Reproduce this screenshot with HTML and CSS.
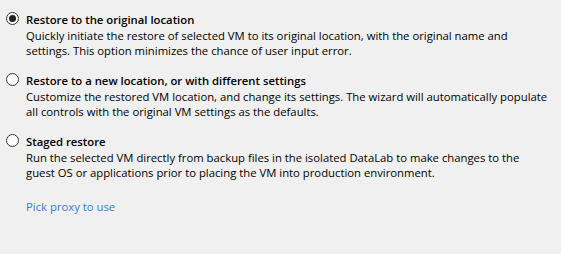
FILE: index.html
```html
<!DOCTYPE html>
<html>
<head>
<meta charset="utf-8">
<link rel="stylesheet" href="styles.css">
</head>
<body>
<div class="page">
  <div class="option">
    <div class="head">
      <span class="radio checked"><span class="dot"></span></span>
      <span class="title">Restore to the original location</span>
    </div>
    <p class="desc">Quickly initiate the restore of selected VM to its original location, with the original name and settings. This option minimizes the chance of user input error.</p>
  </div>
  <div class="option">
    <div class="head">
      <span class="radio"></span>
      <span class="title">Restore to a new location, or with different settings</span>
    </div>
    <p class="desc">Customize the restored VM location, and change its settings. The wizard will automatically populate all controls with the original VM settings as the defaults.</p>
  </div>
  <div class="option">
    <div class="head">
      <span class="radio"></span>
      <span class="title">Staged restore</span>
    </div>
    <p class="desc">Run the selected VM directly from backup files in the isolated DataLab to make changes to the guest OS or applications prior to placing the VM into production environment.</p>
  </div>
  <a class="link" href="#">Pick proxy to use</a>
</div>
</body>
</html>
```
FILE: styles.css
```css
html, body {
  margin: 0;
  padding: 0;
  background: #f0f0f0;
}
.page {
  width: 561px;
  height: 254px;
  box-sizing: border-box;
  padding: 12px 0 0 6px;
  font-family: "Open Sans", "Noto Sans", sans-serif;
  font-size: 11.3px;
  line-height: 15px;
  color: #000;
  display: flex;
  flex-direction: column;
}
.option {
  display: flex;
  flex-direction: column;
  margin-bottom: 15px;
}
.option:last-of-type {
  margin-bottom: 19px;
}
.head {
  display: flex;
  align-items: flex-start;
  gap: 7px;
  height: 15px;
}
.radio {
  width: 11px;
  height: 11px;
  border: 1px solid #333;
  border-radius: 50%;
  background: #fff;
  display: flex;
  align-items: center;
  justify-content: center;
  box-sizing: content-box;
}
.dot {
  width: 7px;
  height: 7px;
  border-radius: 50%;
  background: #222;
}
.title {
  font-weight: 600;
}
.desc {
  margin: 1px 0 0 20px;
  width: 523px;
}
.link {
  margin-left: 20px;
  color: #3a7bd5;
  text-decoration: none;
  align-self: flex-start;
}
```
